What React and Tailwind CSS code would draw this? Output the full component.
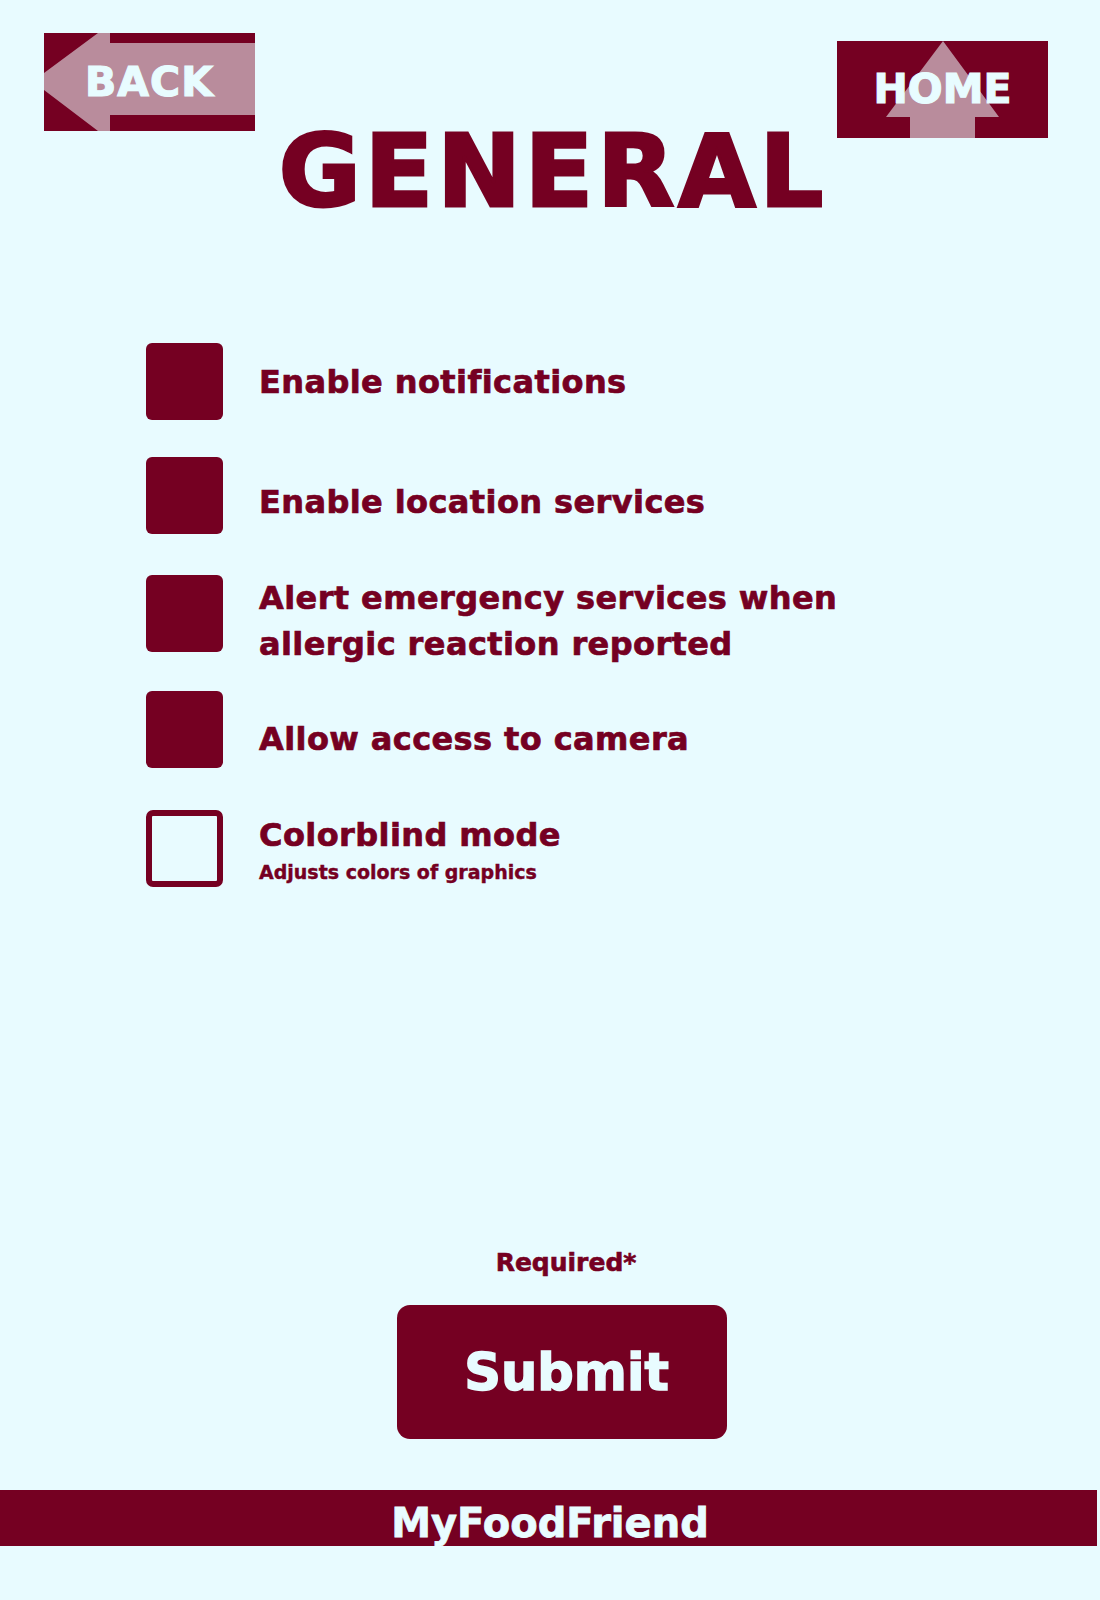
const SETTINGS = [
  { id: 'notif', label: 'Enable notifications', checked: true, mt: 'mt-0', textMt: 'mt-[16px]' },
  { id: 'location', label: 'Enable location services', checked: true, mt: 'mt-[37px]', textMt: 'mt-[22px]' },
  { id: 'alert', label: 'Alert emergency services when allergic reaction reported', checked: true, mt: 'mt-[41px]', textMt: 'mt-0' },
  { id: 'camera', label: 'Allow access to camera', checked: true, mt: 'mt-[24px]', textMt: 'mt-[25px]' },
  { id: 'colorblind', label: 'Colorblind mode', sub: 'Adjusts colors of graphics', checked: false, mt: 'mt-[42px]', textMt: 'mt-[2px]' },
]

function BackButton() {
  return (
    <button className="relative w-[211px] h-[98px] bg-[#750022] flex items-center justify-center">
      <svg className="absolute inset-0" width="211" height="98" viewBox="0 0 211 98">
        <polygon
          points="0,40 54,0 66,0 66,10 211,10 211,82 66,82 66,98 54,98 0,57"
          fill="#b98c9c"
        />
      </svg>
      <span className="relative text-[41px] leading-none tracking-[1px] text-[#e8fcff] [-webkit-text-stroke:1.2px_#e8fcff]">BACK</span>
    </button>
  )
}

function HomeButton() {
  return (
    <button className="relative mt-[8px] w-[211px] h-[97px] bg-[#750022] flex items-center justify-center">
      <svg className="absolute inset-0" width="211" height="97" viewBox="0 0 211 97">
        <polygon points="106,0 162,76 138,76 138,97 73,97 73,76 49,76" fill="#b98c9c" />
      </svg>
      <span className="relative text-[41px] leading-none text-[#e8fcff] [-webkit-text-stroke:1.2px_#e8fcff]">HOME</span>
    </button>
  )
}

export default function App() {
  return (
    <div className="w-[1100px] min-h-[1600px] bg-[#e8fbff] text-[#750022] font-bold font-['DejaVu_Sans',sans-serif] pb-[54px]">
      <header className="flex justify-between items-start pl-[44px] pr-[52px] pt-[33px]">
        <BackButton />
        <HomeButton />
      </header>
      <h1 className="-mt-[16px] pl-[6px] text-center text-[100px] leading-none tracking-[4px] [-webkit-text-stroke:3px_#750022]">GENERAL</h1>

      <section className="mt-[121px] pl-[146px]">
        {SETTINGS.map(s => (
          <label key={s.id} className={`flex items-start gap-[36px] ${s.mt}`}>
            {s.checked ? (
              <span className="shrink-0 w-[77px] h-[77px] rounded-[6px] bg-[#750022]" />
            ) : (
              <span className="shrink-0 w-[77px] h-[77px] rounded-[7px] border-[6px] border-[#750022]" />
            )}
            <div className={s.textMt}>
              <div className="max-w-[650px] text-[32px] leading-[46px] tracking-[0.4px] [-webkit-text-stroke:0.7px_#750022]">{s.label}</div>
              {s.sub && <div className="mt-[2px] text-[19px] leading-[24px] [-webkit-text-stroke:0.4px_#750022]">{s.sub}</div>}
            </div>
          </label>
        ))}
      </section>

      <p className="mt-[361px] pl-[32px] text-center text-[25px] leading-[30px] [-webkit-text-stroke:0.6px_#750022]">Required*</p>
      <button className="mt-[27px] ml-[397px] w-[330px] h-[134px] rounded-[13px] bg-[#750022] flex items-center justify-center pl-[9px]">
        <span className="text-[51px] leading-none text-[#e8fcff] [-webkit-text-stroke:1.5px_#e8fcff]">Submit</span>
      </button>

      <footer className="mt-[51px] w-[1097px] h-[56px] bg-[#750022] pt-[13px] text-center">
        <span className="pl-[3px] text-[40px] leading-[40px] text-[#e8fcff] [-webkit-text-stroke:0.8px_#e8fcff]">MyFoodFriend</span>
      </footer>
    </div>
  )
}
